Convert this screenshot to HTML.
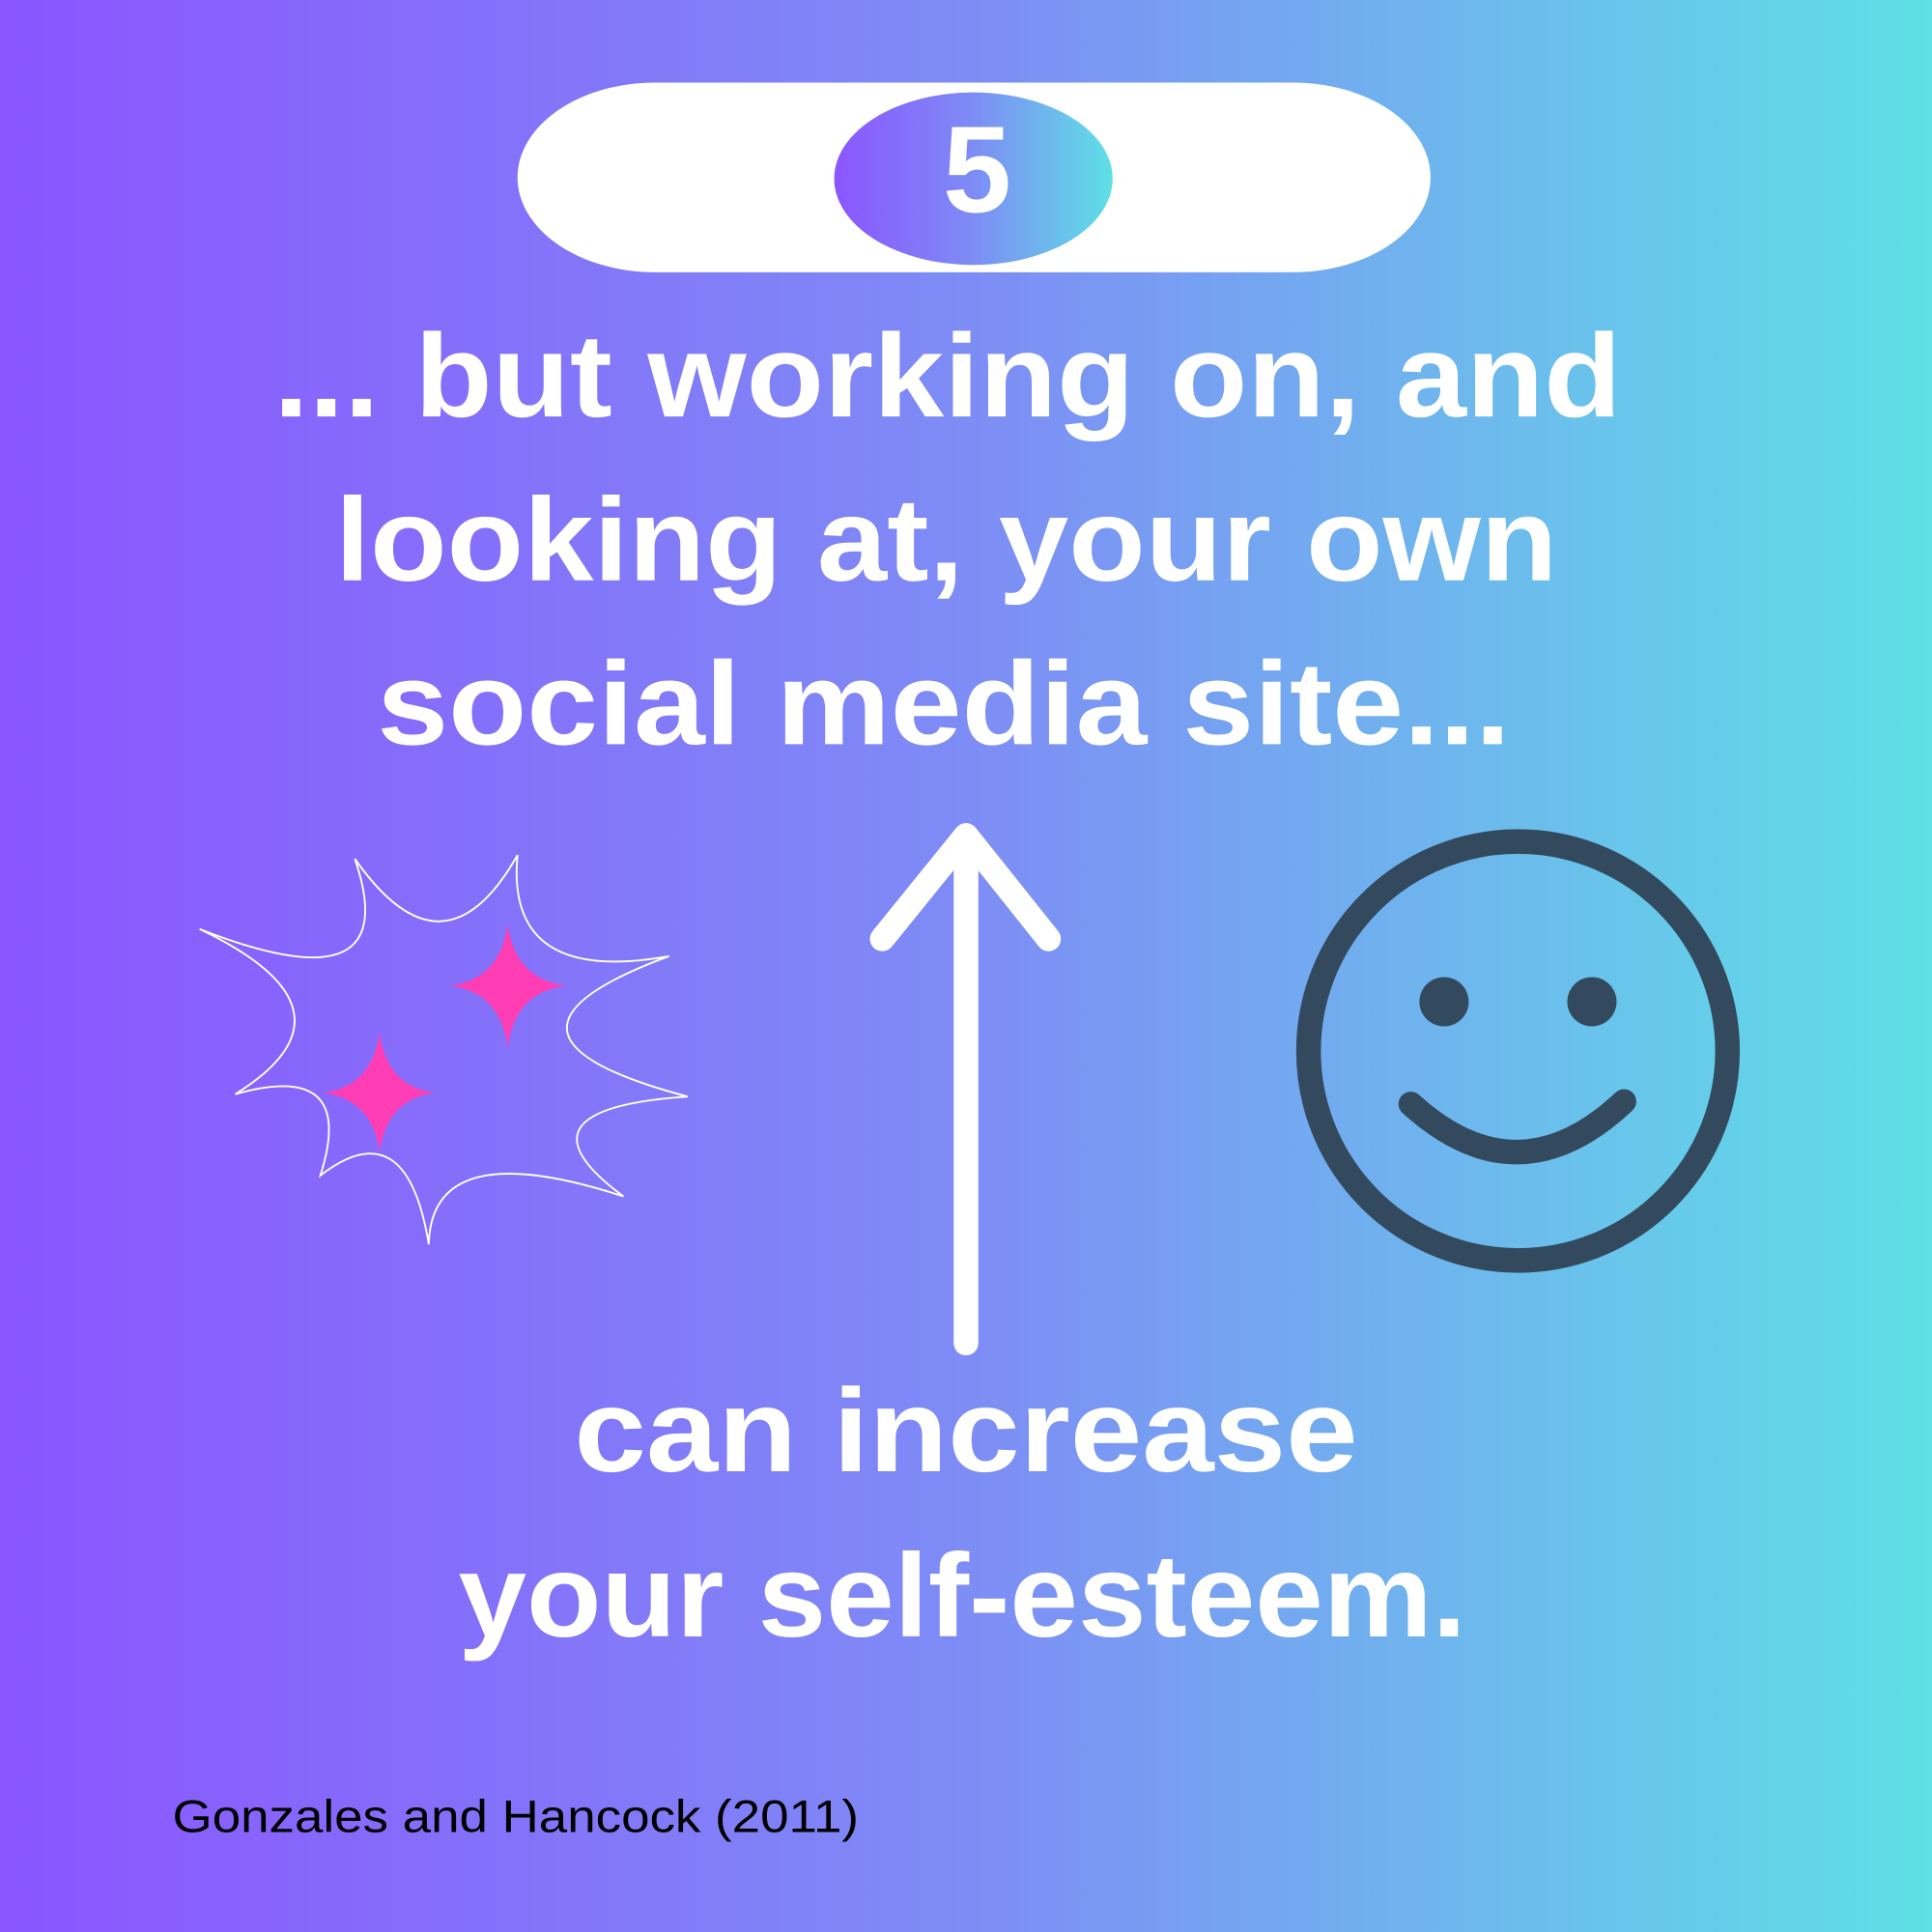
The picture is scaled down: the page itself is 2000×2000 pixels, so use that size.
<!DOCTYPE html>
<html><head><meta charset="utf-8"><style>
html,body{margin:0;padding:0;width:2000px;height:2000px;overflow:hidden}
svg{display:block}
</style></head><body>
<svg width="2000" height="2000" viewBox="0 0 1568 1568" xmlns="http://www.w3.org/2000/svg">
<defs>
<linearGradient id="bg" x1="0" y1="0" x2="1" y2="0">
<stop offset="0" stop-color="#8B55FF"/><stop offset="0.5" stop-color="#7E8CF5"/><stop offset="1" stop-color="#5EE0E6"/>
</linearGradient>
<linearGradient id="pg" x1="0" y1="0" x2="1" y2="0">
<stop offset="0" stop-color="#8B55FF"/><stop offset="0.5" stop-color="#7E8CF5"/><stop offset="1" stop-color="#5EE0E6"/>
</linearGradient>
</defs>
<rect width="1568" height="1568" fill="url(#bg)"/>
<rect x="420" y="67" width="741" height="154" rx="112" ry="77" fill="#fff"/>
<ellipse cx="790" cy="145" rx="113" ry="70" fill="url(#pg)"/>
<text x="793" y="172" text-anchor="middle" fill="#fff" font-family="Liberation Sans, sans-serif" font-weight="bold" font-size="100">5</text>
<g fill="#fff" font-family="Liberation Sans, sans-serif" font-weight="bold" font-size="96">
<text x="222" y="338" textLength="1094" lengthAdjust="spacingAndGlyphs">... but working on, and</text>
<text x="272" y="471" textLength="992" lengthAdjust="spacingAndGlyphs">looking at, your own</text>
<text x="306" y="604" textLength="920" lengthAdjust="spacingAndGlyphs">social media site...</text>
<text x="466" y="1194" textLength="636" lengthAdjust="spacingAndGlyphs">can increase</text>
<text x="372" y="1328" textLength="818" lengthAdjust="spacingAndGlyphs">your self-esteem.</text>
</g>
<text x="140" y="1487" font-family="Liberation Sans, sans-serif" font-size="37" fill="#000" textLength="557" lengthAdjust="spacingAndGlyphs">Gonzales and Hancock (2011)</text>
<g stroke="#fff" stroke-width="20" stroke-linecap="round" stroke-linejoin="round" fill="none">
<line x1="784" y1="1090" x2="784" y2="682"/>
<polyline points="716,762 784,678 851,762"/>
</g>
<g stroke="#334A5E" stroke-width="20" fill="none" stroke-linecap="round">
<circle cx="1232" cy="853" r="170"/>
<path d="M1145,896 Q1232,975 1318,894"/>
</g>
<circle cx="1172" cy="813" r="20" fill="#334A5E"/>
<circle cx="1292" cy="813" r="20" fill="#334A5E"/>
<path d="M162,754 Q330,820 288,697 Q360,800 420,694 Q410,800 543,776 Q370,840 558,890 Q410,900 506,971 Q350,920 348,1010 Q330,900 260,954 Q290,860 191,888 Q300,820 162,754 Z" fill="none" stroke="#fff" stroke-width="1.5"/>
<g fill="#FF3EB5">
<path d="M412,750 Q418,795 460,800 Q418,805 412,850 Q406,805 365,800 Q406,795 412,750 Z"/>
<path d="M308,838 Q314,882 353,887 Q314,892 308,935 Q302,892 262,887 Q302,882 308,838 Z"/>
</g>
</svg>
</body></html>
